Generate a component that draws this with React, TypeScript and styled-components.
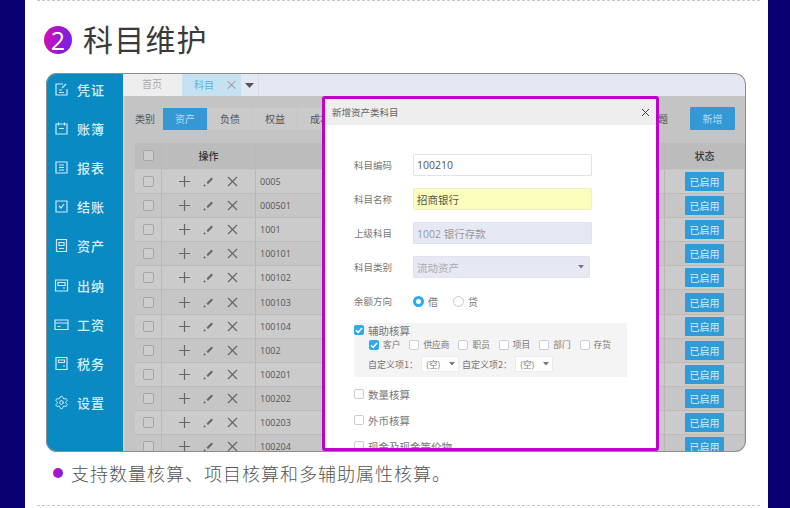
import React from 'react';
import styled, { createGlobalStyle } from 'styled-components';
import { Settings } from 'lucide-react';

const GlobalStyle = createGlobalStyle`
  html, body {
    margin: 0;
    padding: 0;
    background: #0b0072;
    font-family: "Noto Sans CJK SC", "Noto Sans", sans-serif;
  }
  * {
    box-sizing: border-box;
  }
`;

const NAV_ITEMS: [string, string][] = [
  ['凭证', 'M9 2H2v11h11V7M5 8h3M5 10.5h5M8 6l4-4'],
  ['账簿', 'M2 3h11v10H2zM4.5 1.5v3M10.5 1.5v3M5 7.5h5'],
  ['报表', 'M2 2h11v11H2zM5 5h5M5 7.5h5M5 10h5'],
  ['结账', 'M2 2h11v11H2zM5 7l2 2 3-4'],
  ['资产', 'M2.5 1.5h10v12h-10zM5 4.5h5v3H5zM5 10.5h5'],
  ['出纳', 'M1.5 2h12v11h-12zM4 4.5h7v3H4zM9 10h2'],
  ['工资', 'M1 3h13v9.500H1zM1 6h13M3.500 9.500h3'],
  ['税务', 'M2 1.500h11v12H2zM4.500 4h6v2.500h-6zM9 10h2'],
];

const CODES = ['0005', '000501', '1001', '100101', '100102', '100103', '100104', '1002', '100201', '100202', '100203', '100204'];
const TYPES = ['资产', '负债', '权益', '成本'];
const AUX = ['客户', '供应商', '职员', '项目', '部门', '存货'];

function Check({ on, size = 10 }: { on?: boolean; size?: number }) {
  return (
    <CheckBox $on={on} $size={size}>
      {on && (
        <svg width={size} height={size} viewBox="0 0 10 10">
          <path d="M2 5.200 4.200 7.300 8 3" fill="none" stroke="#fff" strokeWidth="1.500" />
        </svg>
      )}
    </CheckBox>
  );
}

function Caret() {
  return (
    <svg width="6" height="4" viewBox="0 0 6 4">
      <path d="M0 0h6L3 3.500z" fill="#777" />
    </svg>
  );
}

function RowTools() {
  return (
    <Tools>
      <svg width="11" height="11" viewBox="0 0 11 11">
        <path d="M5.500 0v11M0 5.500h11" stroke="#666" strokeWidth="1.200" />
      </svg>
      <svg width="11" height="11" viewBox="0 0 11 11">
        <path d="M.5 10.500l.6-2.500 1.900 1.900zM3.500 6.500L8.500 1.500l1.500 1.500-5 5z" fill="#666" />
      </svg>
      <svg width="11" height="11" viewBox="0 0 11 11">
        <path d="M1 1l9 9M10 1l-9 9" stroke="#666" strokeWidth="1.200" />
      </svg>
    </Tools>
  );
}

export default function App() {
  return (
    <Sheet>
      <GlobalStyle />
      <Rule />
      <TitleRow>
        <NumberBadge>2</NumberBadge>
        <Title>科目维护</Title>
      </TitleRow>
      <Frame>
        <Sidebar>
          {NAV_ITEMS.map(([name, d]) => (
            <NavItem key={name}>
              <svg width="15" height="15" viewBox="0 0 15 15">
                <path d={d} fill="none" stroke="#cfeaf6" strokeWidth="1.200" />
              </svg>
              <span>{name}</span>
            </NavItem>
          ))}
          <NavItem>
            <Settings size={15} color="#cfeaf6" strokeWidth={1.6} />
            <span>设置</span>
          </NavItem>
        </Sidebar>
        <Main>
          <TabBar>
            <Tab>首页</Tab>
            <Tab $active>
              科目
              <TabClose>×</TabClose>
            </Tab>
            <TabMenu>
              <svg width="9" height="5" viewBox="0 0 9 5">
                <path d="M0 0h9L4.500 5z" fill="#555" />
              </svg>
            </TabMenu>
          </TabBar>
          <Content>
            <FilterRow>
              <FilterLabel>类别</FilterLabel>
              {TYPES.map((t, i) => (
                <TypeButton key={t} $active={i === 0}>
                  {t}
                </TypeButton>
              ))}
              <FilterTail>主题</FilterTail>
              <AddButton>新增</AddButton>
            </FilterRow>
            <TableHead>
              <Cell $center>
                <RowCheck />
              </Cell>
              <Cell $center>操作</Cell>
              <Cell $center>编码</Cell>
              <Cell $center>状态</Cell>
            </TableHead>
            {CODES.map((code, i) => (
              <TableRow key={code} $odd={i % 2 === 1}>
                <Cell $center>
                  <RowCheck />
                </Cell>
                <Cell $center>
                  <RowTools />
                </Cell>
                <Cell>{code}</Cell>
                <Cell $center>
                  <StatusButton>已启用</StatusButton>
                </Cell>
              </TableRow>
            ))}
          </Content>
        </Main>
        <Modal>
          <ModalHead>
            新增资产类科目
            <svg width="9" height="9" viewBox="0 0 9 9">
              <path d="M1 1l7 7M8 1L1 8" stroke="#444" strokeWidth="1" />
            </svg>
          </ModalHead>
          <ModalBody>
            <FormRow>
              <FieldLabel>科目编码</FieldLabel>
              <Input>100210</Input>
            </FormRow>
            <FormRow>
              <FieldLabel>科目名称</FieldLabel>
              <Input $bg="#fbfdbb" $border="#eeeecf">
                招商银行
              </Input>
            </FormRow>
            <FormRow>
              <FieldLabel>上级科目</FieldLabel>
              <Input $bg="#e6e9f4" $border="#e0e3ef" $color="#999">
                1002 银行存款
              </Input>
            </FormRow>
            <FormRow>
              <FieldLabel>科目类别</FieldLabel>
              <Input $bg="#e6e9f4" $border="#e0e3ef" $color="#aaa" $narrow>
                流动资产
                <Caret />
              </Input>
            </FormRow>
            <RadioRow>
              <FieldLabel>余额方向</FieldLabel>
              <Radio $on />
              <RadioText>借</RadioText>
              <Radio />
              <RadioText>贷</RadioText>
            </RadioRow>
            <AuxBox>
              <AuxTitle>
                <Check on />
                <CheckText>辅助核算</CheckText>
              </AuxTitle>
              <AuxItems>
                {AUX.map((a, i) => (
                  <AuxItem key={a}>
                    <Check on={i === 0} />
                    <span>{a}</span>
                  </AuxItem>
                ))}
              </AuxItems>
              <AuxSelects>
                <span>自定义项1：</span>
                <MiniSelect>
                  (空)
                  <Caret />
                </MiniSelect>
                <span>自定义项2：</span>
                <MiniSelect>
                  (空)
                  <Caret />
                </MiniSelect>
              </AuxSelects>
            </AuxBox>
            <CheckRow>
              <Check />
              <CheckText>数量核算</CheckText>
            </CheckRow>
            <CheckRow>
              <Check />
              <CheckText>外币核算</CheckText>
            </CheckRow>
            <CheckRow>
              <Check />
              <CheckText>现金及现金等价物</CheckText>
            </CheckRow>
          </ModalBody>
        </Modal>
      </Frame>
      <Caption>
        <Dot />
        支持数量核算、项目核算和多辅助属性核算。
      </Caption>
      <Rule $bottom />
    </Sheet>
  );
}

const Sheet = styled.div`
  width: 743px;
  height: 508px;
  margin-left: 25px;
  background: #fff;
  overflow: hidden;
  display: flex;
  flex-direction: column;
`;
const Rule = styled.div<{ $bottom?: boolean }>`
  height: 1px;
  flex: none;
  margin: ${(p) => (p.$bottom ? '16px 8px 0 12px' : '0 8px 0 12px')};
  border-top: 1px dashed #c8c8c8;
`;
const TitleRow = styled.div`
  height: 72px;
  flex: none;
  padding: 4px 0 0 19px;
  display: flex;
  align-items: flex-start;
`;
const NumberBadge = styled.div`
  width: 28px;
  height: 28px;
  margin-top: 21px;
  border-radius: 50%;
  background: linear-gradient(100deg, #d80cb4, #6a22ea);
  color: #fff;
  font: 500 25px/28px 'Open Sans', sans-serif;
  text-align: center;
`;
const Title = styled.div`
  margin: 12px 0 0 11px;
  font-size: 30px;
  line-height: 42px;
  letter-spacing: 1.2px;
  color: #3a3a3a;
  font-weight: 400;
`;
const Frame = styled.div`
  position: relative;
  flex: none;
  display: flex;
  width: 700px;
  height: 379px;
  margin-left: 21px;
  border-radius: 11px;
  overflow: hidden;

  &::after {
    content: '';
    position: absolute;
    inset: 0;
    border-radius: 11px;
    box-shadow: inset 0 0 0 1px #8c8c8c;
    pointer-events: none;
  }
`;
const Sidebar = styled.div`
  width: 77px;
  flex: none;
  background: #0a8ac2;
`;
const NavItem = styled.div`
  height: 39.100px;
  display: flex;
  align-items: center;
  padding: 0 0 6px 8px;
  color: #d4eef8;
  font-size: 13px;
  font-weight: 500;
  letter-spacing: 1px;

  svg {
    margin-right: 8px;
  }
`;
const Main = styled.div`
  flex: 1;
  min-width: 0;
  display: flex;
  flex-direction: column;
`;
const TabBar = styled.div`
  height: 22px;
  flex: none;
  margin-top: 1px;
  display: flex;
  background: #e4e8f2;
`;
const Tab = styled.div<{ $active?: boolean }>`
  width: 59px;
  padding-left: ${(p) => (p.$active ? '12px' : '19px')};
  background: ${(p) => (p.$active ? '#c6e2f0' : '#eeeeee')};
  color: ${(p) => (p.$active ? '#55b6e6' : '#aaa')};
  font-size: 10px;
  line-height: 19px;
  white-space: nowrap;
`;
const TabClose = styled.span`
  margin-left: 11px;
  color: #99a;
  font-size: 13px;
`;
const TabMenu = styled.div`
  width: 18px;
  border-right: 1px solid #d8dce6;
  display: flex;
  align-items: center;
  justify-content: center;
`;
const Content = styled.div`
  flex: 1;
  min-height: 0;
  overflow: hidden;
  background: #c4c4c4;
  padding: 11px 1px 0 10px;
  border-left: 2px solid #cfcfcf;
`;
const FilterRow = styled.div`
  display: flex;
  align-items: center;
  height: 23px;
  margin: 0 10px 13px 0;
`;
const FilterLabel = styled.div`
  width: 26px;
  margin-right: 2px;
  color: #555;
  font-size: 10px;
`;
const TypeButton = styled.div<{ $active?: boolean }>`
  width: 44px;
  height: 22px;
  margin-right: 1px;
  background: ${(p) => (p.$active ? '#3398d4' : '#cacaca')};
  color: ${(p) => (p.$active ? '#b8dcf2' : '#555')};
  font-size: 10px;
  line-height: 22px;
  text-align: center;
`;
const FilterTail = styled.div`
  margin-left: auto;
  color: #555;
  font-size: 10px;
`;
const AddButton = styled.div`
  width: 45px;
  height: 23px;
  margin-left: 22px;
  border-radius: 1px;
  background: #3398d4;
  color: #b8dcf2;
  font-size: 10px;
  line-height: 23px;
  text-align: center;
`;
const TableHead = styled.div`
  display: grid;
  grid-template-columns: 27px 94px 1fr 80px;
  height: 26px;
  background: #bcbcbc;
  color: #333;
  font-size: 10px;
  font-weight: 500;
  padding-bottom: 1px;
  margin-bottom: 1px;
`;
const TableRow = styled.div<{ $odd?: boolean }>`
  display: grid;
  grid-template-columns: 27px 94px 1fr 80px;
  height: 24.100px;
  background: ${(p) => (p.$odd ? '#c6c6c6' : '#cbcbcb')};
  border-bottom: 1px solid #bcbcbc;
  color: #555;
  font: 9px 'Open Sans', sans-serif;
`;
const Cell = styled.div<{ $center?: boolean }>`
  display: flex;
  align-items: center;
  justify-content: ${(p) => (p.$center ? 'center' : 'flex-start')};
  padding-left: ${(p) => (p.$center ? '0' : '4px')};
  border-right: 1px solid #b8b8b8;
`;
const RowCheck = styled.div`
  width: 11px;
  height: 11px;
  border: 1px solid #a4a4ae;
  border-radius: 2px;
  background: #cdcdcd;
`;
const Tools = styled.div`
  display: flex;
  gap: 13px;
`;
const StatusButton = styled.div`
  width: 39px;
  height: 19px;
  border-radius: 1px;
  background: #2f9bd8;
  color: #bfe0f3;
  font: 500 10px/19px "Noto Sans CJK SC", sans-serif;
  text-align: center;
`;
const Modal = styled.div`
  position: absolute;
  left: 276px;
  top: 23px;
  width: 337px;
  height: 355px;
  border: 3px solid #bf00c8;
  border-radius: 3px;
  background: #fff;
  overflow: hidden;
`;
const ModalHead = styled.div`
  height: 26px;
  padding: 0 6px 0 7px;
  display: flex;
  align-items: center;
  justify-content: space-between;
  background: #eeeeee;
  color: #666;
  font-size: 9.500px;
`;
const ModalBody = styled.div`
  padding: 29px 0 0 29px;
`;
const FormRow = styled.div`
  display: flex;
  align-items: center;
  height: 22px;
  margin-bottom: 12px;
`;
const FieldLabel = styled.div`
  width: 59px;
  flex: none;
  color: #777;
  font-size: 9.500px;
`;
const Input = styled.div<{ $bg?: string; $border?: string; $color?: string; $narrow?: boolean }>`
  width: ${(p) => (p.$narrow ? '177px' : '179px')};
  height: 22px;
  padding: 0 5px 0 3px;
  display: flex;
  align-items: center;
  justify-content: space-between;
  background: ${(p) => p.$bg || '#fff'};
  border: 1px solid ${(p) => p.$border || '#e0e2ee'};
  border-radius: 1px;
  color: ${(p) => p.$color || '#555'};
  font: 10.500px "Open Sans", "Noto Sans CJK SC", sans-serif;
`;
const RadioRow = styled.div`
  display: flex;
  align-items: center;
  height: 14px;
  margin: 16px 0 15px;
`;
const Radio = styled.div<{ $on?: boolean }>`
  width: 11px;
  height: 11px;
  border-radius: 50%;
  background: #fff;
  border: ${(p) => (p.$on ? '3.500px solid #2cabf0' : '1px solid #c4c8dc')};
`;
const RadioText = styled.div`
  width: 25px;
  margin-left: 4px;
  color: #777;
  font-size: 10px;
`;
const AuxBox = styled.div`
  width: 273px;
  height: 54px;
  background: #f4f4f4;
`;
const AuxTitle = styled.div`
  display: flex;
  align-items: center;
  height: 14px;
`;
const CheckBox = styled.div<{ $on?: boolean; $size: number }>`
  width: ${(p) => p.$size}px;
  height: ${(p) => p.$size}px;
  flex: none;
  display: flex;
  border-radius: 2px;
  background: ${(p) => (p.$on ? '#2cabf0' : '#fff')};
  border: ${(p) => (p.$on ? '0' : '1px solid #c8ccdc')};
`;
const CheckText = styled.span`
  margin-left: 4px;
  color: #777;
  font-size: 10.500px;
`;
const AuxItems = styled.div`
  display: flex;
  align-items: center;
  height: 15px;
  padding-left: 15px;
`;
const AuxItem = styled.div`
  display: flex;
  align-items: center;
  margin-right: 9px;
  color: #777;
  font-size: 8.700px;

  span {
    margin-left: 4px;
  }
`;
const AuxSelects = styled.div`
  display: flex;
  align-items: center;
  gap: 3px;
  height: 18px;
  margin-top: 3px;
  padding-left: 14px;
  color: #777;
  font-size: 9px;
`;
const MiniSelect = styled.div`
  width: 38px;
  height: 16px;
  padding: 0 3px 0 4px;
  display: flex;
  align-items: center;
  justify-content: space-between;
  background: #fff;
  border: 1px solid #ececf0;
  font-size: 8.700px;
`;
const CheckRow = styled.div`
  display: flex;
  align-items: center;
  height: 14px;
  margin: 10px 0 12px;
`;
const Caption = styled.div`
  height: 32px;
  margin-top: 5px;
  flex: none;
  padding-left: 28px;
  display: flex;
  align-items: center;
  color: #555;
  font-size: 18px;
  letter-spacing: 1px;
  font-weight: 300;
`;
const Dot = styled.span`
  width: 10px;
  height: 10px;
  margin-right: 8px;
  border-radius: 50%;
  background: linear-gradient(100deg, #d80cb4, #6a22ea);
`;
